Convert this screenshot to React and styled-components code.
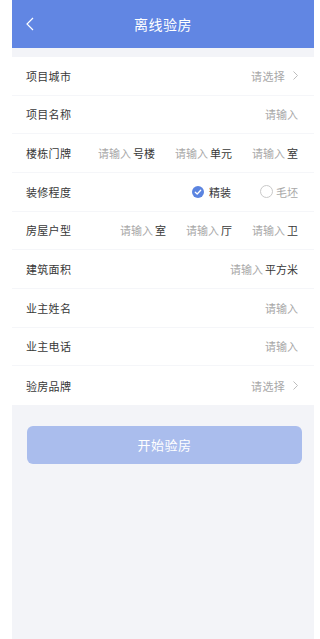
import React from "react";
import styled, { createGlobalStyle } from "styled-components";

const Global = createGlobalStyle`
  html, body { margin: 0; padding: 0; background: #fff; }
  body { font-family: "Noto Sans CJK SC", "Noto Sans", sans-serif; }
  * { box-sizing: border-box; }
  input::placeholder { color: #a8a8a8; }
`;

const Page = styled.div`
  margin-left: 12px;
  width: 302px;
  min-height: 100vh;
  background: #f3f4f8;
  display: flex;
  flex-direction: column;
`;

const Header = styled.header`
  height: 48px;
  background: #6186e3;
  display: flex;
  align-items: center;
  justify-content: center;
  position: relative;
  color: #fff;
  font-size: 14px;
  letter-spacing: 0.5px;
`;

const Back = styled.button`
  position: absolute;
  left: 8px;
  top: 14px;
  width: 20px;
  height: 20px;
  padding: 0;
  border: 0;
  background: transparent;
  display: flex;
  align-items: center;
  justify-content: center;
`;

const List = styled.div`
  margin-top: 9px;
  background: #fff;
  display: flex;
  flex-direction: column;
`;

const Row = styled.div`
  height: 38.67px;
  display: flex;
  align-items: center;
  justify-content: space-between;
  padding: 0 16px 0 14px;
  border-bottom: ${(p) => (p.$last ? "0" : "1.5px solid #f5f6f9")};
`;

const Label = styled.span`
  font-size: 11px;
  color: #383838;
  letter-spacing: 0.3px;
  white-space: nowrap;
`;

const Values = styled.div`
  display: flex;
  align-items: center;
  gap: ${(p) => p.$gap || 0}px;
`;

const Group = styled.div`
  display: flex;
  align-items: center;
  gap: 2px;
`;

const Input = styled.input`
  border: 0;
  outline: none;
  padding: 0;
  background: transparent;
  font-family: inherit;
  font-size: 11px;
  color: #333;
  text-align: right;
  width: ${(p) => p.$w || 33}px;
`;

const Unit = styled.span`
  font-size: 11px;
  color: #383838;
  white-space: nowrap;
`;

const Select = styled.div`
  display: flex;
  align-items: center;
  gap: 8px;
  font-size: 11px;
  color: #a8a8a8;
  letter-spacing: 0.3px;
`;

const Radio = styled.label`
  display: flex;
  align-items: center;
  gap: ${(p) => (p.$checked ? 5 : 3)}px;
  font-size: 11px;
  color: ${(p) => (p.$checked ? "#383838" : "#a8a8a8")};
`;

const Circle = styled.span`
  width: ${(p) => (p.$checked ? 12 : 13)}px;
  height: ${(p) => (p.$checked ? 12 : 13)}px;
  border-radius: 50%;
  display: flex;
  align-items: center;
  justify-content: center;
  background: ${(p) => (p.$checked ? "#5b84e0" : "#fff")};
  border: ${(p) => (p.$checked ? "0" : "1px solid #c9c9c9")};
`;

const Footer = styled.div`
  padding: 21px 12px 0 15px;
`;

const StartButton = styled.button`
  width: 100%;
  height: 38px;
  border: 0;
  border-radius: 6px;
  background: #aabded;
  color: #fff;
  font-family: inherit;
  font-size: 13px;
  letter-spacing: 0.5px;
`;

const Chevron = () => (
  <svg width="5" height="9" viewBox="0 0 5 9">
    <polyline points="0.5,0.5 4.5,4.5 0.5,8.5" fill="none" stroke="#b5b5b5" strokeWidth="0.9" />
  </svg>
);

const Check = () => (
  <svg width="8" height="8" viewBox="0 0 8 8">
    <polyline points="1.3,4.2 3.2,6 6.7,2.2" fill="none" stroke="#fff" strokeWidth="1.3" strokeLinecap="round" strokeLinejoin="round" />
  </svg>
);

const SelectValue = () => (
  <Select>
    请选择
    <Chevron />
  </Select>
);

export default function App() {
  return (
    <>
      <Global />
      <Page>
        <Header>
          <Back aria-label="返回">
            <svg width="8" height="14" viewBox="0 0 8 14">
              <polyline points="7,1 1,7 7,13" fill="none" stroke="#fff" strokeWidth="1.2" />
            </svg>
          </Back>
          离线验房
        </Header>
        <List>
          <Row>
            <Label>项目城市</Label>
            <SelectValue />
          </Row>
          <Row>
            <Label>项目名称</Label>
            <Input $w={80} placeholder="请输入" />
          </Row>
          <Row>
            <Label>楼栋门牌</Label>
            <Values $gap={20}>
              <Group>
                <Input placeholder="请输入" />
                <Unit>号楼</Unit>
              </Group>
              <Group>
                <Input placeholder="请输入" />
                <Unit>单元</Unit>
              </Group>
              <Group>
                <Input placeholder="请输入" />
                <Unit>室</Unit>
              </Group>
            </Values>
          </Row>
          <Row>
            <Label>装修程度</Label>
            <Values $gap={29}>
              <Radio $checked>
                <Circle $checked>
                  <Check />
                </Circle>
                精装
              </Radio>
              <Radio>
                <Circle />
                毛坯
              </Radio>
            </Values>
          </Row>
          <Row>
            <Label>房屋户型</Label>
            <Values $gap={20}>
              <Group>
                <Input placeholder="请输入" />
                <Unit>室</Unit>
              </Group>
              <Group>
                <Input placeholder="请输入" />
                <Unit>厅</Unit>
              </Group>
              <Group>
                <Input placeholder="请输入" />
                <Unit>卫</Unit>
              </Group>
            </Values>
          </Row>
          <Row>
            <Label>建筑面积</Label>
            <Group>
              <Input placeholder="请输入" />
              <Unit>平方米</Unit>
            </Group>
          </Row>
          <Row>
            <Label>业主姓名</Label>
            <Input $w={80} placeholder="请输入" />
          </Row>
          <Row>
            <Label>业主电话</Label>
            <Input $w={80} placeholder="请输入" />
          </Row>
          <Row $last>
            <Label>验房品牌</Label>
            <SelectValue />
          </Row>
        </List>
        <Footer>
          <StartButton>开始验房</StartButton>
        </Footer>
      </Page>
    </>
  );
}
